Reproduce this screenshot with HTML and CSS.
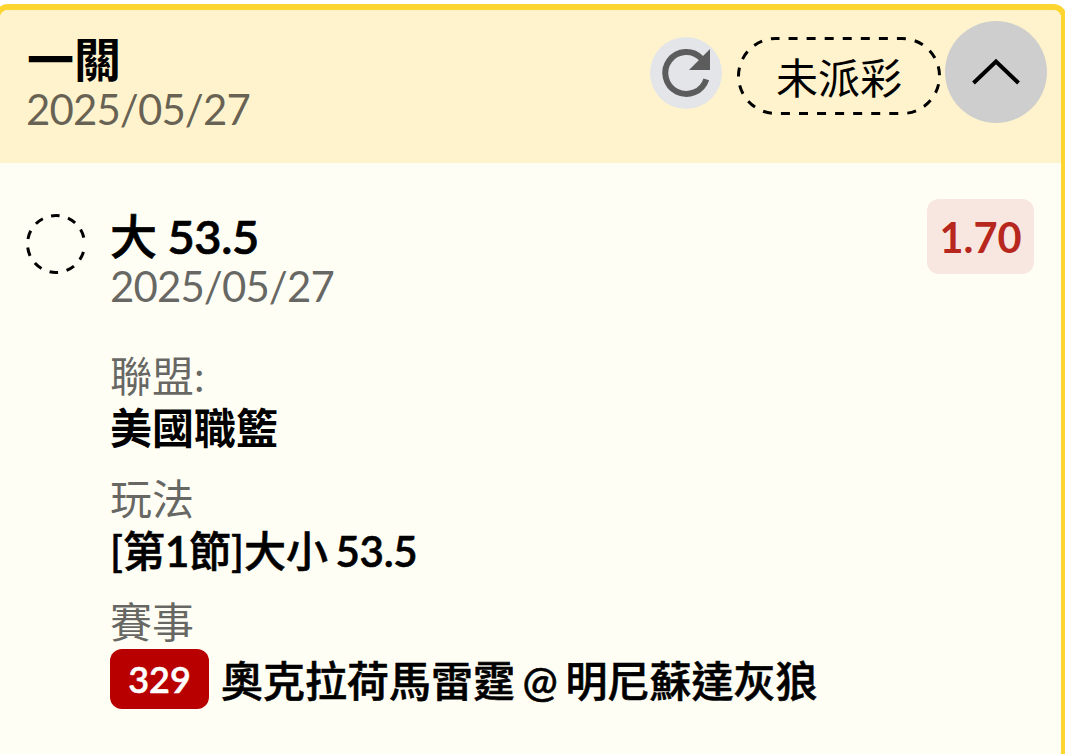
FILE: index.html
```
<!DOCTYPE html>
<html lang="zh-Hant">
<head>
    <meta charset="UTF-8">
    <meta name="viewport" content="width=device-width, initial-scale=1.0">
    <title>未派彩</title>
    <link rel="stylesheet" href="styles.css">
</head>
<body>
    <div class="bet-card">
        <div class="card-header">
            <div class="header-info">
                <h1>一關</h1>
                <p class="date">2025/05/27</p>
            </div>
            <button type="button" class="refresh-btn" aria-label="refresh">
                <svg width="72" height="72" viewBox="0 0 72 72">
                    <path d="M56.3 42.3A21 21 0 1 1 51.5 21.5" fill="none" stroke="#5c5c5c" stroke-width="6"/>
                    <path d="M60 12v21H39z" fill="#5c5c5c"/>
                </svg>
            </button>
            <div class="status">
                <svg class="status-border" width="204" height="78" viewBox="0 0 204 78">
                    <rect x="1.5" y="1.5" width="201" height="75" rx="37.5" fill="none" stroke="#000" stroke-width="3" stroke-dasharray="9 9.06" stroke-dashoffset="5.5"/>
                </svg>
                <span>未派彩</span>
            </div>
            <button type="button" class="toggle-btn" aria-label="toggle">
                <svg width="102" height="102" viewBox="0 0 102 102">
                    <path d="M28.5 62L51 40.5L73.5 62" fill="none" stroke="#000" stroke-width="4"/>
                </svg>
            </button>
        </div>

        <div class="card-body">
            <svg class="result-circle" width="60" height="60" viewBox="0 0 60 60">
                <circle cx="30" cy="30" r="28.5" fill="none" stroke="#000" stroke-width="3" stroke-dasharray="8.6 8.7" stroke-dashoffset="-8"/>
            </svg>
            <div class="bet-info">
                <h2>大 <b>53.5</b></h2>
                <p class="date">2025/05/27</p>
                <dl>
                    <dt>聯盟:</dt>
                    <dd>美國職籃</dd>
                    <dt>玩法</dt>
                    <dd class="medium">[第<b>1</b>節]大小 <b>53.5</b></dd>
                    <dt>賽事</dt>
                    <dd class="match medium">
                        <span class="match-no">329</span>
                        <span class="teams">奧克拉荷馬雷霆 @ 明尼蘇達灰狼</span>
                    </dd>
                </dl>
            </div>
            <span class="odds">1.70</span>
        </div>
    </div>
</body>
</html>
```
FILE: styles.css
```
* {
    box-sizing: border-box;
}
body {
    margin: 0;
    padding-top: 4px;
    background-color: white;
    font-family: Lato, "Noto Sans CJK TC", sans-serif;
    font-size: 42px;
    color: #000;
    overflow: hidden;
}
h1, h2, p, dl, dd {
    margin: 0;
}
b {
    font-weight: 600;
    letter-spacing: -0.3px;
}
.bet-card {
    width: 1073px;
    height: 750px;
    margin-left: -6px;
    border: 6px solid #fdd530;
    border-bottom: none;
    border-radius: 14px 14px 0 0;
    background-color: #fffef5;
    overflow: hidden;
}
.card-header {
    display: flex;
    align-items: flex-start;
    height: 153px;
    padding: 11px 14px 0 27px;
    background-color: #fff3cd;
}
.header-info {
    flex: 1;
    padding-top: 13px;
}
h1, h2 {
    font-size: 47px;
    font-weight: 600;
    line-height: 50px;
}
h2 {
    font-weight: 500;
    word-spacing: -1.5px;
    -webkit-text-stroke: 0.7px #000;
}
.date {
    margin-left: -1px;
    line-height: 50px;
    letter-spacing: -0.9px;
    color: rgba(0, 0, 0, 0.6);
}
button {
    padding: 0;
    border: none;
    border-radius: 50%;
    cursor: pointer;
}
button svg {
    display: block;
}
.refresh-btn {
    margin-top: 16px;
    background-color: #e3e5e8;
}
.status {
    position: relative;
    width: 204px;
    height: 78px;
    margin: 16px 4px 0 15px;
    line-height: 82px;
    text-align: center;
}
.status-border {
    position: absolute;
    top: 0;
    left: 0;
}
.toggle-btn {
    background-color: #cecece;
}
.card-body {
    display: flex;
    align-items: flex-start;
    padding: 36px 27px 0 26px;
}
.result-circle {
    margin: 15px 24px 0 0;
}
.bet-info {
    flex: 1;
    padding-top: 12px;
}
.bet-info .date {
    margin-left: 0;
}
dl {
    margin-top: 40px;
}
dt {
    line-height: 51px;
    color: rgba(0, 0, 0, 0.6);
}
dd {
    margin-bottom: 20px;
    font-weight: 600;
    line-height: 52px;
    word-spacing: -3px;
}
.medium {
    font-weight: 500;
    -webkit-text-stroke: 0.6px #000;
}
.match {
    display: flex;
    align-items: center;
    padding-top: 1px;
}
.match-no {
    width: 99px;
    height: 60px;
    margin-right: 12px;
    border-radius: 12px;
    background-color: #b80000;
    color: white;
    font-size: 36px;
    font-weight: 600;
    line-height: 61px;
    text-align: center;
    -webkit-text-stroke: 0.5px #fff;
}
.teams {
    padding-top: 4px;
}
.odds {
    width: 107px;
    height: 75px;
    border-radius: 12px;
    background-color: #f8e7e1;
    color: #b7271d;
    font-size: 41.5px;
    font-weight: bold;
    line-height: 77px;
    text-align: center;
}
```
